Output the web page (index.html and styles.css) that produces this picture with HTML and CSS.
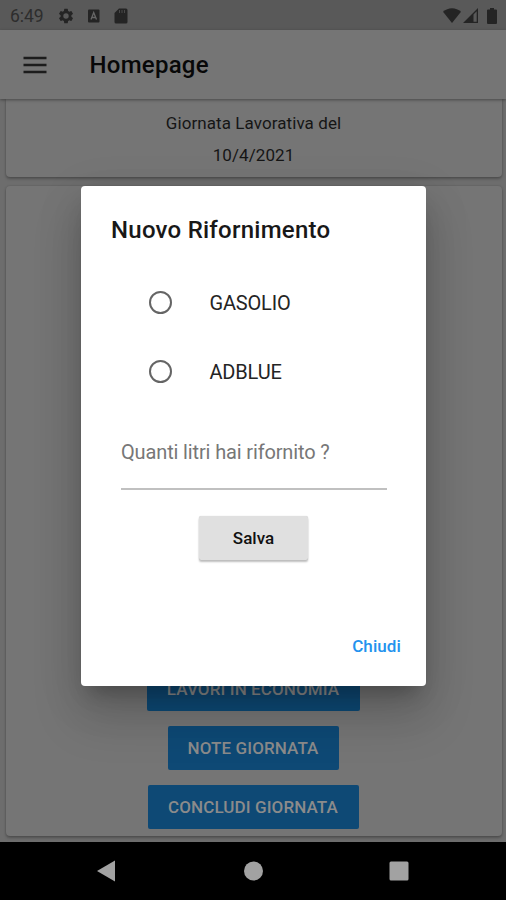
FILE: index.html
```html
<!DOCTYPE html>
<html lang="it">
<head>
<meta charset="utf-8">
<meta name="viewport" content="width=device-width">
<title>Homepage</title>
<link rel="stylesheet" href="styles.css">
</head>
<body>
<div class="phone">
  <header class="status">
    <span class="clock">6:49</span>
    <svg class="gear" width="18" height="18" viewBox="0 0 24 24"><path d="M19.14 12.94c.04-.3.06-.61.06-.94s-.02-.64-.07-.94l2.03-1.58a.49.49 0 0 0 .12-.61l-1.92-3.32a.49.49 0 0 0-.59-.22l-2.39.96c-.5-.38-1.03-.7-1.62-.94l-.36-2.54a.48.48 0 0 0-.48-.41h-3.84a.47.47 0 0 0-.47.41l-.36 2.54c-.59.24-1.13.57-1.62.94l-2.39-.96a.48.48 0 0 0-.59.22L2.74 8.87a.47.47 0 0 0 .12.61l2.03 1.58c-.05.3-.09.63-.09.94s.02.64.07.94l-2.03 1.58a.49.49 0 0 0-.12.61l1.92 3.32c.12.22.37.29.59.22l2.39-.96c.5.38 1.03.7 1.62.94l.36 2.54c.05.24.24.41.48.41h3.84c.24 0 .44-.17.47-.41l.36-2.54c.59-.24 1.13-.56 1.62-.94l2.39.96c.22.08.47 0 .59-.22l1.92-3.32a.47.47 0 0 0-.12-.61zM12 15.6A3.6 3.6 0 1 1 12 8.400a3.600 3.600 0 0 1 0 7.200z"/></svg>
    <svg class="keyboard" width="12" height="14" viewBox="0 0 12 14"><rect y="0.500" width="11.500" height="13" rx="1"/><path class="mark" d="M3 10.500 5.700 3.500 8.500 10.500M4 8.500h3.500"/></svg>
    <svg class="sd" width="14" height="16" viewBox="0 0 14 16"><path d="M5 .5h7q1.500 0 1.500 1.500v12q0 1.500-1.500 1.500H2Q.5 15.500.5 14V5z"/><path class="slots" d="M5.500 2v3M8 2v3M10.500 2v3"/></svg>
    <span class="spacer"></span>
    <svg class="wifi" width="18" height="15" viewBox="0 0 18 15"><path d="M0 3.700C5-1 13-1 18 3.700L9 15z"/></svg>
    <svg class="signal" width="15" height="15" viewBox="0 0 15 15"><path d="M15 0v15H0zM13.700 3.200 10.500 6.500v7.200h3.200z" fill-rule="evenodd"/></svg>
    <svg class="battery" width="10" height="16" viewBox="0 0 10 16"><path d="M3 0h4v1.500h2q1 0 1 1V15q0 1-1 1H1q-1 0-1-1V2.500q0-1 1-1h2z"/></svg>
  </header>
  <div class="toolbar">
    <svg width="24" height="18" viewBox="0 0 24 18"><path d="M.5 2h23M.5 9h23M.5 16h23"/></svg>
    <h1>Homepage</h1>
  </div>
  <main class="content">
    <section class="card day"><p>Giornata Lavorativa del</p><p>10/4/2021</p></section>
    <section class="card actions">
      <button class="primary economy">LAVORI IN ECONOMIA</button>
      <button class="primary notes">NOTE GIORNATA</button>
      <button class="primary finish">CONCLUDI GIORNATA</button>
    </section>
  </main>
  <nav class="navigation">
    <svg width="506" height="58" viewBox="0 0 506 58"><path d="M97 29 115 18.500v21z"/><circle cx="253.500" cy="29" r="9.500"/><rect x="389.500" y="19.500" width="19" height="19" rx="1.500"/></svg>
  </nav>
  <section class="dialog" role="dialog">
    <h2>Nuovo Rifornimento</h2>
    <div class="options">
      <label class="option"><i class="radio"></i><span>GASOLIO</span></label>
      <label class="option"><i class="radio"></i><span>ADBLUE</span></label>
    </div>
    <div class="field"><span>Quanti litri hai rifornito ?</span></div>
    <button class="save">Salva</button>
    <button class="close">Chiudi</button>
  </section>
</div>
</body>
</html>
```
FILE: styles.css
```css
* { box-sizing: border-box; }
body { margin: 0; font-family: Roboto, sans-serif; color: #151515; }
h1, h2, p { margin: 0; font-weight: 400; }
button { border: 0; padding: 0; font-family: inherit; }
svg { display: block; flex: none; }
.phone { position: relative; width: 506px; height: 900px; overflow: hidden; display: flex; flex-direction: column; background: #6d6d6d; }
.status { height: 30px; flex: none; display: flex; align-items: center; padding: 1px 9px 0 10px; background: #595959; fill: #242424; }
.clock { width: 47px; font-size: 17.5px; color: #2d2d2d; letter-spacing: -.05px; }
.keyboard { margin-left: 13px; }
.mark { fill: none; stroke: #666; stroke-width: 1.3; }
.sd { margin-left: 14px; }
.slots { stroke: #484848; stroke-width: 1; }
.spacer { flex: 1; }
.signal { margin-left: 2px; }
.battery { margin-left: 9px; }
.toolbar { position: relative; z-index: 1; height: 69px; flex: none; display: flex; align-items: center; padding: 0 23px; background: #757575; box-shadow: 0 1px 3px rgba(0,0,0,.4); }
.toolbar svg { stroke: #1c1c1c; stroke-width: 2.6; }
.toolbar h1 { margin-left: 42.5px; padding-top: 1px; font-size: 24px; font-weight: 500; color: #080808; letter-spacing: .25px; }
.content { height: 743px; flex: none; padding: 0 4px 0 6px; overflow: hidden; background: #6d6d6d; }
.card { background: #757575; box-shadow: 0 2px 3px rgba(0,0,0,.25), 0 0 2px rgba(0,0,0,.18); border-radius: 4px; }
.day { height: 78px; padding: 8px 1px 0 0; text-align: center; font-size: 17px; line-height: 32px; letter-spacing: .08px; border-radius: 0 0 4px 4px; }
.actions { height: 650px; margin-top: 9px; padding: 0 2px 7px 0; display: flex; flex-direction: column; align-items: center; justify-content: flex-end; gap: 15px; }
.primary { height: 44px; border-radius: 2px; background: #0e4975; color: #8b8b8b; font-size: 17px; font-weight: 500; letter-spacing: .1px; }
.economy { width: 213px; }
.notes { width: 171px; }
.finish { width: 211px; }
.navigation { height: 58px; flex: none; background: #000; fill: #a2a2a2; }
.dialog { position: absolute; z-index: 2; left: 81px; top: 186px; width: 345px; height: 500px; display: flex; flex-direction: column; background: #fff; border-radius: 4px; box-shadow: 0 14px 19px -9px rgba(0,0,0,.25), 0 30px 48px 4px rgba(0,0,0,.14), 0 11px 45px 5px rgba(0,0,0,.08); }
.dialog h2 { padding: 29px 30px 0; font-size: 24px; line-height: 31px; font-weight: 500; color: #181818; letter-spacing: .25px; white-space: nowrap; }
.options { padding: 22px 0 0 68px; }
.option { display: flex; align-items: center; height: 69px; font-size: 20px; letter-spacing: -.18px; color: #242424; }
.radio { width: 23px; height: 23px; margin-right: 37.5px; border: 2px solid #656565; border-radius: 50%; }
.field { width: 266px; height: 65px; margin: 19px 0 0 40px; padding-top: 15px; border-bottom: 2px solid #c0c0c0; color: #777; font-size: 20px; line-height: 24px; letter-spacing: -.14px; white-space: nowrap; }
.save { width: 109px; height: 44px; margin: 26px 0 0 118px; border-radius: 2px; background: #e0e0e0; box-shadow: 0 2px 2px rgba(0,0,0,.25), 0 0 1px rgba(0,0,0,.2); font-size: 17px; font-weight: 500; color: #111; }
.close { margin: 75px 25px 0 auto; background: none; font-size: 17px; line-height: 22px; font-weight: 500; letter-spacing: .1px; color: #2392ee; }
```
